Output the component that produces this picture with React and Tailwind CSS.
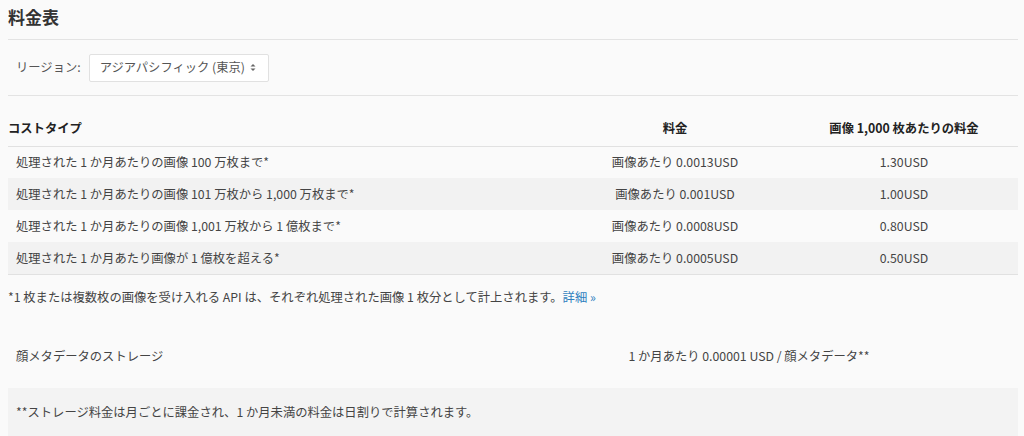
const rows = [
  ["処理された 1 か月あたりの画像 100 万枚まで*", "画像あたり 0.0013USD", "1.30USD"],
  ["処理された 1 か月あたりの画像 101 万枚から 1,000 万枚まで*", "画像あたり 0.001USD", "1.00USD"],
  ["処理された 1 か月あたりの画像 1,001 万枚から 1 億枚まで*", "画像あたり 0.0008USD", "0.80USD"],
  ["処理された 1 か月あたり画像が 1 億枚を超える*", "画像あたり 0.0005USD", "0.50USD"],
];

export default function App() {
  return (
    <main
      className="min-h-[436px] w-[1024px] overflow-hidden bg-[#fafafa] pl-2 pr-[6px] text-[12.3px] text-[#444]"
      style={{ fontFamily: '"Noto Sans CJK JP", "Liberation Sans", sans-serif' }}
    >
      <h1 className="pt-[5px] text-[17px] font-bold leading-[24px] text-[#333]">料金表</h1>
      <div className="mt-[10px] border-t border-[#e3e3e3]" />

      <div className="flex h-[55px] items-center gap-[8px] pl-2">
        <span className="whitespace-nowrap text-[#555]">リージョン:</span>
        <div className="flex h-[28px] w-[180px] items-center justify-between whitespace-nowrap rounded-[2px] border border-[#e1e1e1] bg-white pl-[10px] pr-[12px] text-[#555]">
          <span>アジアパシフィック (東京)</span>
          <svg width="6" height="9" viewBox="0 0 6 9">
            <path d="M0.5 3.5 L3 1 L5.5 3.5 Z" fill="#666" />
            <path d="M0.5 5.5 L3 8 L5.5 5.5 Z" fill="#666" />
          </svg>
        </div>
      </div>
      <div className="border-t border-[#e3e3e3]" />

      <table className="mt-[14px] w-[1010px] border-collapse">
        <thead>
          <tr className="h-[36px] border-b border-[#e1e1e1] text-[#222]">
            <th className="w-[552px] text-left font-bold">コストタイプ</th>
            <th className="w-[230px] text-center font-bold">料金</th>
            <th className="text-center font-bold">画像 1,000 枚あたりの料金</th>
          </tr>
        </thead>
        <tbody className="border-b border-[#e1e1e1]">
          {rows.map((r, i) => (
            <tr key={i} className={i % 2 === 1 ? "h-[32px] bg-[#f2f2f2]" : "h-[32px]"}>
              <td className="pl-2">{r[0]}</td>
              <td className="text-center">{r[1]}</td>
              <td className="text-center">{r[2]}</td>
            </tr>
          ))}
        </tbody>
      </table>

      <p className="mt-[12px] leading-[20px]">
        *1 枚または複数枚の画像を受け入れる API は、それぞれ処理された画像 1 枚分として計上されます。
        <a className="text-[#2f7fbf]">詳細 »</a>
      </p>

      <div className="mt-[19px] w-[1010px]">
        <div className="flex h-[62px] items-center">
          <div className="w-[472px] pl-2">顔メタデータのストレージ</div>
          <div className="flex-1 text-center">1 か月あたり 0.00001 USD / 顔メタデータ**</div>
        </div>
        <div className="flex h-[50px] items-center bg-[#f3f3f3] pl-2">
          **ストレージ料金は月ごとに課金され、1 か月未満の料金は日割りで計算されます。
        </div>
      </div>
    </main>
  );
}
